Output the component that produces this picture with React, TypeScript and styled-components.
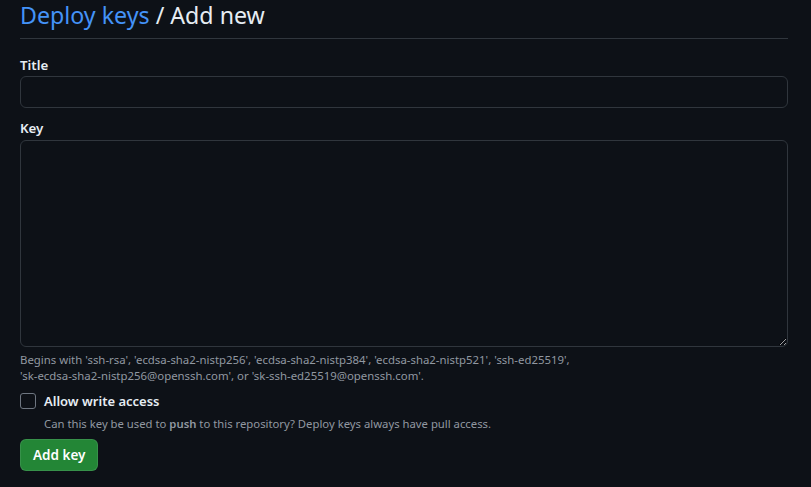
import React from "react";
import styled, { createGlobalStyle } from "styled-components";

const Global = createGlobalStyle`
  html, body { margin: 0; padding: 0; background: #0d1117; }
  body { font-family: "Segoe UI", "Noto Sans", "Liberation Sans", sans-serif; color: #e6edf3; }
  * { box-sizing: border-box; }
`;

const Page = styled.div`
  width: 811px;
  height: 487px;
  padding: 0 23px 0 20px;
  background: #0d1117;
  overflow: hidden;
`;

const Header = styled.div`
  padding-bottom: 8px;
  border-bottom: 1px solid #30363d;
`;

const Heading = styled.h2`
  margin: 0;
  font-size: 23.2px;
  font-weight: 400;
  line-height: 30px;
  color: #e6edf3;
  white-space: nowrap;
`;

const Crumb = styled.a`
  color: #4493f8;
  text-decoration: none;
`;

const Form = styled.form`
  display: flex;
  flex-direction: column;
  padding-top: 16px;
`;

const Group = styled.div<{ $mb?: number }>`
  display: flex;
  flex-direction: column;
  margin-bottom: ${(p) => p.$mb ?? 10}px;
`;

const Label = styled.label<{ $mb?: number }>`
  font-size: 13.3px;
  font-weight: 600;
  line-height: 20px;
  margin-bottom: ${(p) => p.$mb ?? 2}px;
  color: #e6edf3;
`;

const Input = styled.input`
  height: 32px;
  width: 100%;
  background: #0d1117;
  border: 1px solid #30363d;
  border-radius: 6px;
  color: #e6edf3;
  padding: 5px 12px;
  font: inherit;
  font-size: 14px;
  outline: none;
`;

const TextArea = styled.textarea`
  height: 207px;
  width: 100%;
  background: #0d1117;
  border: 1px solid #30363d;
  border-radius: 6px;
  color: #e6edf3;
  padding: 8px 12px;
  font: inherit;
  font-size: 14px;
  outline: none;
  resize: vertical;
  display: block;
`;

const Note = styled.p`
  margin: 5px 0 0;
  font-size: 11.4px;
  line-height: 16px;
  color: #9198a1;
  white-space: nowrap;
`;

const CheckRow = styled.div`
  display: grid;
  grid-template-columns: 16px 1fr;
  column-gap: 8px;
  row-gap: 6px;
  align-items: center;
  margin-top: 8px;
`;

const Box = styled.span`
  width: 16px;
  height: 16px;
  border: 1px solid #6e7681;
  border-radius: 3px;
  background: #0d1117;
`;

const CheckLabel = styled.span`
  font-size: 13px;
  font-weight: 600;
  line-height: 18px;
`;

const CheckNote = styled.span`
  grid-column: 2;
  font-size: 11.3px;
  line-height: 16px;
  color: #9198a1;
  b { font-weight: 600; color: #9198a1; }
`;

const Button = styled.button`
  align-self: flex-start;
  margin-top: 7px;
  height: 32px;
  padding: 0 12px;
  background: #238636;
  border: 1px solid rgba(240, 246, 252, 0.1);
  border-radius: 6px;
  color: #ffffff;
  font: inherit;
  font-size: 13.5px;
  font-weight: 600;
  line-height: 20px;
`;

export default function App() {
  return (
    <>
      <Global />
      <Page>
        <Header>
          <Heading>
            <Crumb href="#">Deploy keys</Crumb> / Add new
          </Heading>
        </Header>
        <Form onSubmit={(e) => e.preventDefault()}>
          <Group>
            <Label $mb={1}>Title</Label>
            <Input type="text" />
          </Group>
          <Group $mb={0}>
            <Label>Key</Label>
            <TextArea />
            <Note>
              Begins with 'ssh-rsa', 'ecdsa-sha2-nistp256', 'ecdsa-sha2-nistp384', 'ecdsa-sha2-nistp521', 'ssh-ed25519',
              <br />
              'sk-ecdsa-sha2-nistp256@openssh.com', or 'sk-ssh-ed25519@openssh.com'.
            </Note>
          </Group>
          <CheckRow>
            <Box />
            <CheckLabel>Allow write access</CheckLabel>
            <CheckNote>
              Can this key be used to <b>push</b> to this repository? Deploy keys always have pull access.
            </CheckNote>
          </CheckRow>
          <Button type="submit">Add key</Button>
        </Form>
      </Page>
    </>
  );
}
